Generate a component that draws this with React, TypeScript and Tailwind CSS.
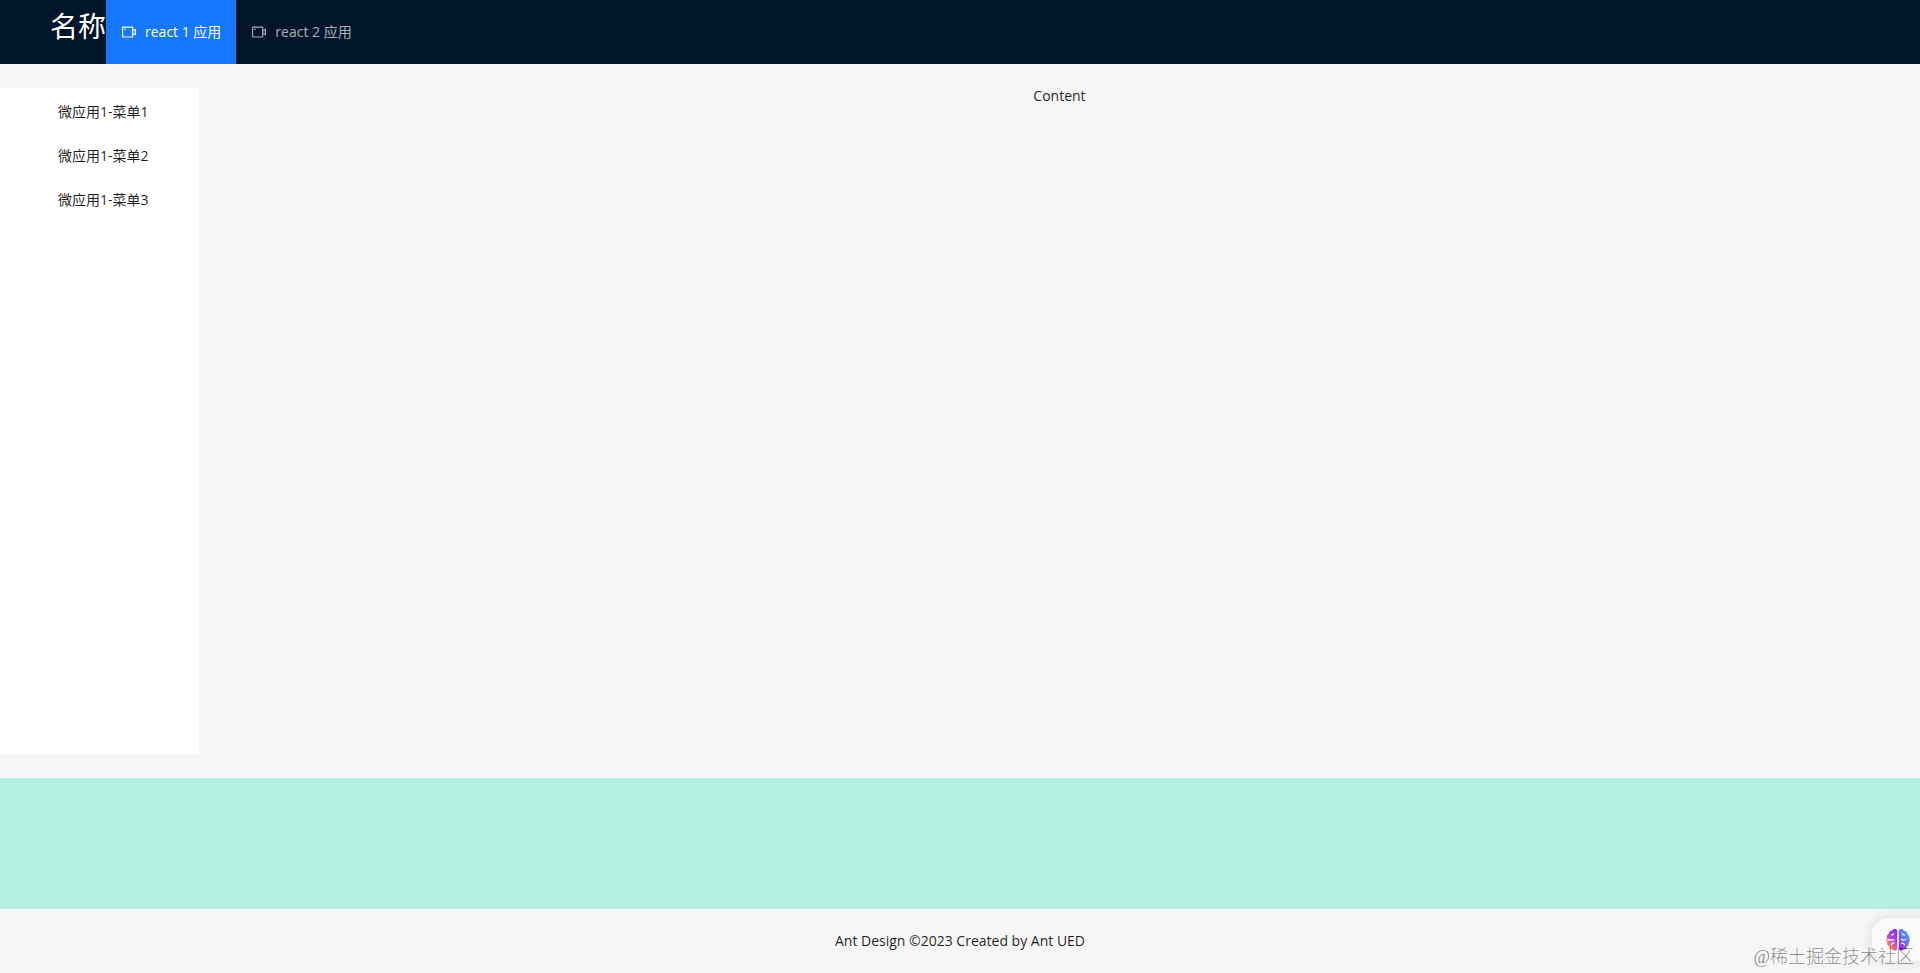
"use client";
import React, { useState } from "react";
import { AiOutlineVideoCamera } from "react-icons/ai";

const apps = [
    { key: "react1", label: "react 1 应用" },
    { key: "react2", label: "react 2 应用" },
];

const menus = ["微应用1-菜单1", "微应用1-菜单2", "微应用1-菜单3"];

// brain logo of the floating assistant
const BrainIcon = () => (
    <svg viewBox="0 0 24 24" className="w-6 h-6" fill="none">
        <defs>
            <linearGradient id="left" x1="0.8" y1="0" x2="0.2" y2="1">
                <stop offset="0" stopColor="#7a2cf5" />
                <stop offset="0.45" stopColor="#b04ad8" />
                <stop offset="0.85" stopColor="#ff8a50" />
            </linearGradient>
            <linearGradient id="right" x1="1" y1="0" x2="0.2" y2="1">
                <stop offset="0" stopColor="#45aaf5" />
                <stop offset="0.5" stopColor="#5a7cf2" />
                <stop offset="1" stopColor="#b01fe6" />
            </linearGradient>
        </defs>
        <path
            fill="url(#left)"
            d="M11.2 2.500v18.500c-.8 2-3.600 2.400-4.800.6-1.900.1-3.300-1.300-3.100-3-1.700-.7-2.500-2.300-1.900-3.900C.1 13.500-.2 11.400.8 9.900.4 8.300 1.200 6.700 2.700 6 2.600 4.100 4.200 2.600 6 2.800 7 .5 10.600.4 11.200 2.500Z"
        />
        <path
            fill="url(#right)"
            d="M12.800 2.500v18.500c.8 2 3.600 2.400 4.800.6 1.900.1 3.300-1.300 3.100-3 1.700-.7 2.500-2.300 1.900-3.900 1.300-1.200 1.600-3.300.6-4.800.4-1.600-.4-3.200-1.900-3.900.1-1.900-1.500-3.400-3.300-3.200-1-2.300-4.600-2.400-5.200-.3Z"
        />
        <g stroke="#fff" strokeWidth="1.200" strokeLinecap="round">
            <path d="M5.500 7.200c1.200 0 2-.6 2.200-1.600M1.500 11.800h6.500M5.500 16.800c.3-1.300 1.400-2 2.700-1.900" />
            <path d="M18.500 7.200c-1.200 0-2-.6-2.200-1.600M15.500 11.200c1 1.300 3 1.300 4.200.2M18.500 17c-.3-1.300-1.400-2-2.700-1.900" />
        </g>
    </svg>
);

export default function App() {
    const [current, setCurrent] = useState("react1");

    return (
        <div className="relative min-h-screen flex flex-col bg-[#f6f6f6] text-sm leading-[22px] text-black/88 font-['Open_Sans','Noto_Sans_CJK_SC',sans-serif]">
            {/* HEADER */}
            <header className="h-16 flex bg-[#001529] pl-[50px]">
                <h1 className="text-[28px] leading-[52px] text-white">名称</h1>
                <nav className="flex">
                    {apps.map((app) => (
                        <button
                            key={app.key}
                            onClick={() => setCurrent(app.key)}
                            className={
                                "flex items-center gap-2 px-[15px] " +
                                (current === app.key ? "bg-[#1677ff] text-white" : "text-white/65")
                            }
                        >
                            <AiOutlineVideoCamera size={16} />
                            <span>{app.label}</span>
                        </button>
                    ))}
                </nav>
            </header>

            {/* SIDER + CONTENT */}
            <div className="flex flex-1 py-6">
                <aside className="w-[199px] bg-white">
                    <ul>
                        {menus.map((menu) => (
                            <li key={menu} className="m-1">
                                <button className="w-full h-10 pl-[54px] text-left">{menu}</button>
                            </li>
                        ))}
                    </ul>
                </aside>
                <main className="flex-1 text-center leading-4">Content</main>
            </div>

            {/* MICRO APP AREA */}
            <div className="h-[131px] bg-[#b5f0e2]" />

            <footer className="py-[21px] text-center">Ant Design ©2023 Created by Ant UED</footer>

            {/* FLOATING ASSISTANT */}
            <button
                aria-label="assistant"
                className="absolute right-0 bottom-3 w-12 h-[43px] pl-[14px] rounded-l-2xl bg-[#fafafa] shadow-[0_0_10px_4px_rgba(0,0,0,0.06)]"
            >
                <BrainIcon />
            </button>
            <span className="absolute right-[6px] bottom-1 text-lg leading-6 font-light text-black/45 font-['Liberation_Serif','Noto_Sans_CJK_SC',serif]">
                @稀土掘金技术社区
            </span>
        </div>
    );
}
